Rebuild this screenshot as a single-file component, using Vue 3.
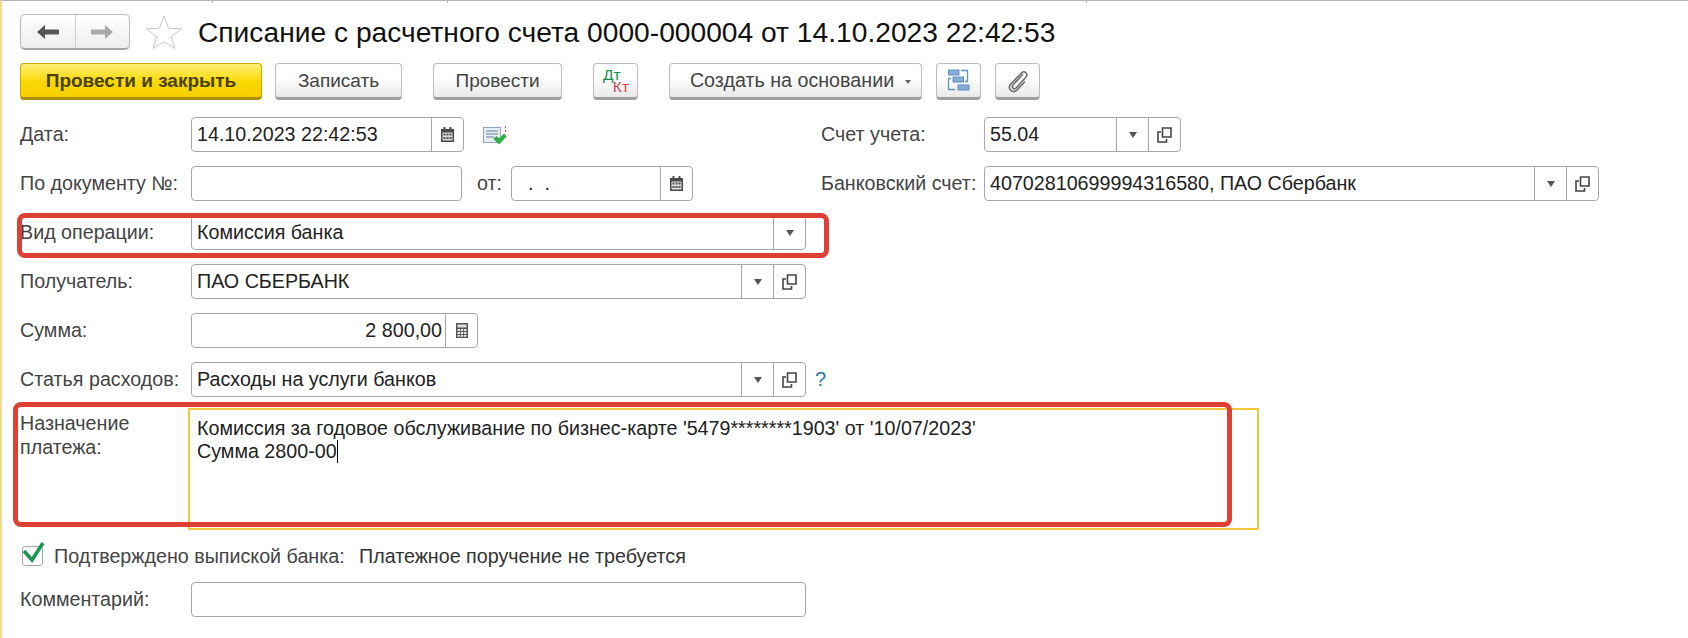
<script setup>
</script>

<template>
  <div class="page">
    <i class="tick t1"></i><i class="tick t2"></i><i class="tick t3"></i>
    <header class="head">
      <div class="nav">
        <span class="nav-cell">
          <svg width="22" height="16" viewBox="0 0 22 16"><path d="M0 8 8 1v4.500h14v5H8V15z" fill="#555"/></svg>
        </span>
        <span class="nav-cell">
          <svg width="22" height="16" viewBox="0 0 22 16"><path d="M22 8 14 1v4.500H0v5h14V15z" fill="#a9a9a9"/></svg>
        </span>
      </div>
      <svg class="star" width="36" height="34" viewBox="0 0 36 34"><path d="M18 1l4.600 12.300 12.900.5-10.100 8 3.500 11.700L18 26.700 7.100 33.500l3.500-11.700-10.100-8 12.900-.5z" fill="#fff" stroke="#c6c6c6"/></svg>
      <h1 class="title">Списание с расчетного счета 0000-000004 от 14.10.2023 22:42:53</h1>
    </header>

    <div class="toolbar">
      <button class="btn primary">Провести и закрыть</button>
      <button class="btn save">Записать</button>
      <button class="btn post">Провести</button>
      <button class="btn square dtkt">
        <span class="dt">Дт</span><span class="kt">Кт</span>
      </button>
      <button class="btn create">Создать на основании<i class="caret"></i></button>
      <button class="btn square struct">
        <svg width="23" height="23" viewBox="0 0 23 23" fill="none">
          <path d="M4 9.500H1.500v11H8M14 1.500h6.500v11H18" stroke="#5b93c4" stroke-width="1.300"/>
          <rect x="1.500" y="1" width="10.500" height="5" fill="#85aed6" stroke="#5f8fbd"/>
          <rect x="6" y="8" width="10.500" height="5" fill="#85aed6" stroke="#5f8fbd"/>
          <rect x="11" y="16" width="11" height="5" fill="#85aed6" stroke="#5f8fbd"/>
        </svg>
      </button>
      <button class="btn square clip">
        <svg width="22" height="24" viewBox="0 0 22 24" fill="none">
          <path d="M16 5 6 16c-2 2.500 1 5 3.200 3L19 8c2.500-3-1.500-7-4.500-4.200L3.500 15.500c-3.500 4.500 2.500 9.500 6.500 5.500l8-8.500" stroke="#6e6e6e" stroke-width="1.600"/>
        </svg>
      </button>
    </div>

    <div class="row">
      <label class="lbl">Дата:</label>
      <div class="field w-date">
        <span class="val">14.10.2023 22:42:53</span>
        <span class="cell"><svg width="13" height="15" viewBox="0 0 13 15"><path d="M0 2h13v13H0z" fill="#4a4a4a"/><path d="M2.500 0h2v4h-2zM8.500 0h2v4h-2z" fill="#4a4a4a"/><path d="M1.500 5.500h10v8h-10z" fill="#ddd"/><path d="M2.500 6.500h2v2h-2zM5.500 6.500h2v2h-2zM8.500 6.500h2v2h-2zM2.500 10h2v2h-2zM5.500 10h2v2h-2zM8.500 10h2v2h-2z" fill="#555"/></svg></span>
      </div>
      <svg class="docicon" width="24" height="20" viewBox="0 0 24 20">
        <rect x=".5" y="1.500" width="17" height="15" fill="#e6eef6" stroke="#8aa6c1"/>
        <path d="M3 5h12M3 8h12M3 11h8" stroke="#6d7f92" stroke-width="1.200"/>
        <path d="M22.500 0v2M22.500 4v2" stroke="#d05050"/>
        <path d="M10.500 13l3-3 2.500 2.500 5-5 2.500 3-7.500 8z" fill="#2fae3f"/>
      </svg>
      <div class="right">
        <label class="lbl r-lbl">Счет учета:</label>
        <div class="field w-acc">
          <span class="val">55.04</span>
          <span class="cell"><i class="tri"></i></span>
          <span class="cell"><svg width="15" height="16" viewBox="0 0 15 16" fill="none" stroke="#444" stroke-width="1.600"><path d="M5.500 1h8.500v9H5.500z"/><path d="M4 5H1v10h8.500v-3"/></svg></span>
        </div>
      </div>
    </div>

    <div class="row">
      <label class="lbl">По документу №:</label>
      <div class="field w-doc"></div>
      <span class="from">от:</span>
      <div class="field w-date2">
        <span class="val dots">.&nbsp;&nbsp;.</span>
        <span class="cell"><svg width="13" height="15" viewBox="0 0 13 15"><path d="M0 2h13v13H0z" fill="#4a4a4a"/><path d="M2.500 0h2v4h-2zM8.500 0h2v4h-2z" fill="#4a4a4a"/><path d="M1.500 5.500h10v8h-10z" fill="#ddd"/><path d="M2.500 6.500h2v2h-2zM5.500 6.500h2v2h-2zM8.500 6.500h2v2h-2zM2.500 10h2v2h-2zM5.500 10h2v2h-2zM8.500 10h2v2h-2z" fill="#555"/></svg></span>
      </div>
      <div class="right">
        <label class="lbl r-lbl">Банковский счет:</label>
        <div class="field w-bank">
          <span class="val">40702810699994316580, ПАО Сбербанк</span>
          <span class="cell"><i class="tri"></i></span>
          <span class="cell"><svg width="15" height="16" viewBox="0 0 15 16" fill="none" stroke="#444" stroke-width="1.600"><path d="M5.500 1h8.500v9H5.500z"/><path d="M4 5H1v10h8.500v-3"/></svg></span>
        </div>
      </div>
    </div>

    <div class="row">
      <label class="lbl">Вид операции:</label>
      <div class="field w-main">
        <span class="val">Комиссия банка</span>
        <span class="cell"><i class="tri"></i></span>
      </div>
    </div>

    <div class="row">
      <label class="lbl">Получатель:</label>
      <div class="field w-main">
        <span class="val">ПАО СБЕРБАНК</span>
        <span class="cell"><i class="tri"></i></span>
        <span class="cell"><svg width="15" height="16" viewBox="0 0 15 16" fill="none" stroke="#444" stroke-width="1.600"><path d="M5.500 1h8.500v9H5.500z"/><path d="M4 5H1v10h8.500v-3"/></svg></span>
      </div>
    </div>

    <div class="row">
      <label class="lbl">Сумма:</label>
      <div class="field w-sum">
        <span class="val num">2 800,00</span>
        <span class="cell"><svg width="12" height="15" viewBox="0 0 12 15"><path d="M0 0h12v15H0z" fill="#555"/><path d="M1.500 1.500h9v3h-9z" fill="#ddd"/><path d="M1.500 6h2.400v2H1.500zM4.800 6h2.400v2H4.800zM8.100 6h2.400v2H8.100zM1.500 9h2.400v2H1.500zM4.800 9h2.400v2H4.800zM8.100 9h2.400v2H8.100zM1.500 12h2.400v1.800H1.500zM4.800 12h2.400v1.800H4.800zM8.100 12h2.400v1.800H8.100z" fill="#eee"/></svg></span>
      </div>
    </div>

    <div class="row">
      <label class="lbl">Статья расходов:</label>
      <div class="field w-main">
        <span class="val">Расходы на услуги банков</span>
        <span class="cell"><i class="tri"></i></span>
        <span class="cell"><svg width="15" height="16" viewBox="0 0 15 16" fill="none" stroke="#444" stroke-width="1.600"><path d="M5.500 1h8.500v9H5.500z"/><path d="M4 5H1v10h8.500v-3"/></svg></span>
      </div>
      <span class="help">?</span>
    </div>

    <div class="row purpose">
      <label class="lbl two">Назначение<br>платежа:</label>
      <div class="area">
        <div>Комиссия за годовое обслуживание по бизнес-карте '5479********1903' от '10/07/2023'</div>
        <div>Сумма 2800-00<i class="cursor"></i></div>
      </div>
    </div>

    <div class="check-row">
      <span class="box">
        <svg width="24" height="22" viewBox="0 0 24 22"><path d="M2 9l8 9L21 1" fill="none" stroke="#1a9850" stroke-width="3.600"/></svg>
      </span>
      <span class="lbl check-lbl">Подтверждено выпиской банка:</span>
      <span class="note">Платежное поручение не требуется</span>
    </div>

    <div class="row comment">
      <label class="lbl">Комментарий:</label>
      <div class="field w-main"></div>
    </div>

    <div class="mark mark-a"></div>
    <div class="mark mark-b"></div>
  </div>
</template>

<style>
html, body { margin: 0; background: #fff; }
</style>

<style scoped>
.page {
  position: relative;
  box-sizing: border-box;
  width: 1688px;
  height: 638px;
  overflow: hidden;
  background: #fff;
  border-left: 2px solid #f0dc8c;
  border-top: 1px solid #b4b4b4;
  padding-left: 18px;
  font-family: "Liberation Sans", Arial, sans-serif;
  font-size: 19.7px;
  color: #333;
}
.tick {
  position: absolute;
  top: 0;
  width: 1px;
  height: 2px;
  background: #b4b4b4;
}
.t1 { left: 210px; }
.t2 { left: 445px; }
.t3 { left: 1084px; }
.head {
  display: flex;
  align-items: center;
  height: 36px;
  margin-top: 13px;
}
.nav {
  box-sizing: border-box;
  display: flex;
  width: 110px;
  height: 36px;
  border: 1px solid #b9b9b9;
  border-bottom: 2px solid #a5a5a5;
  border-radius: 5px;
  background: linear-gradient(#fff, #eee);
}
.nav-cell {
  flex: 1;
  display: flex;
  align-items: center;
  justify-content: center;
}
.nav-cell + .nav-cell { border-left: 1px solid #d0d0d0; }
.star { margin-left: 16px; flex: none; }
.title {
  margin: 0 0 0 16px;
  font-size: 28.2px;
  font-weight: 400;
  color: #111;
  white-space: nowrap;
}
.toolbar {
  display: flex;
  align-items: stretch;
  height: 37px;
  margin-top: 13px;
}
.btn {
  box-sizing: border-box;
  padding: 0;
  margin: 0;
  display: flex;
  align-items: center;
  justify-content: center;
  border: 1px solid #bdbdbd;
  border-bottom: 3px solid #9f9f9f;
  border-radius: 4px;
  background: linear-gradient(#fff 40%, #e9e9e9);
  font: inherit;
  color: #444;
}
.primary {
  width: 242px;
  font-size: 19px;
  font-weight: 700;
  color: #4a4000;
  border-color: #c9a800;
  border-bottom-color: #a88f10;
  background: linear-gradient(#fff07a, #fbd800 55%, #f6cf00);
}
.save { width: 127px; margin-left: 13px; font-size: 19px; }
.post { width: 129px; margin-left: 31px; font-size: 19px; }
.square { width: 45px; }
.dtkt { margin-left: 31px; flex-direction: column; line-height: 12px; font-size: 15.5px; }
.dt { color: #158f48; align-self: flex-start; margin-left: 9px; }
.kt { color: #d0444c; align-self: flex-end; margin-right: 8px; }
.create { width: 253px; margin-left: 31px; padding-left: 10px; }
.caret {
  width: 0;
  height: 0;
  margin-left: 11px;
  margin-top: 2px;
  border: 3.500px solid transparent;
  border-top: 4px solid #666;
  border-bottom: 0;
}
.struct { margin-left: 14px; }
.clip { margin-left: 14px; }
.row {
  display: flex;
  align-items: stretch;
  height: 35px;
  margin-top: 14px;
}
.toolbar + .row { margin-top: 17px; }
.lbl {
  width: 171px;
  flex: none;
  display: flex;
  align-items: center;
  color: #444;
  white-space: nowrap;
}
.field {
  box-sizing: border-box;
  display: flex;
  align-items: stretch;
  height: 35px;
  border: 1px solid #a8a8a8;
  border-radius: 4px;
  background: #fff;
}
.val {
  flex: 1;
  display: flex;
  align-items: center;
  padding-left: 5px;
  color: #222;
  white-space: nowrap;
  overflow: hidden;
}
.num { justify-content: flex-end; padding-right: 3px; }
.dots { padding-left: 16px; }
.cell {
  width: 31px;
  flex: none;
  display: flex;
  align-items: center;
  justify-content: center;
  border-left: 1px solid #a8a8a8;
}
.tri {
  width: 0;
  height: 0;
  border: 4px solid transparent;
  border-top: 6px solid #555;
  border-bottom: 0;
}
.w-date { width: 273px; }
.w-doc { width: 271px; }
.w-date2 { width: 182px; }
.w-main { width: 615px; }
.w-sum { width: 287px; }
.w-acc { width: 197px; }
.w-bank { width: 615px; }
.docicon { margin-left: 19px; margin-top: 9px; flex: none; }
.from {
  display: flex;
  align-items: center;
  width: 49px;
  padding-left: 15px;
  box-sizing: border-box;
  color: #444;
}
.right {
  display: flex;
  position: absolute;
  left: 819px;
}
.r-lbl { width: 163px; }
.help {
  display: flex;
  align-items: center;
  margin-left: 9px;
  color: #1f78b4;
  font-size: 20px;
}
.purpose {
  height: 122px;
  margin-top: 11px;
}
.two {
  display: block;
  width: 168px;
  padding-top: 3px;
  line-height: 24px;
}
.area {
  box-sizing: border-box;
  width: 1071px;
  height: 122px;
  border: 2px solid #f2c73c;
  padding: 7px 7px;
  line-height: 23px;
  color: #222;
}
.cursor {
  display: inline-block;
  width: 1px;
  height: 23px;
  background: #000;
  vertical-align: top;
}
.check-row {
  display: flex;
  align-items: center;
  height: 24px;
  margin-top: 14px;
  padding-left: 2px;
}
.box {
  box-sizing: border-box;
  width: 21px;
  height: 20px;
  border: 1px solid #a8a8a8;
  border-radius: 3px;
  flex: none;
  display: flex;
}
.box svg { margin: -5px 0 0 -1px; flex: none; }
.check-lbl { width: 305px; margin-left: 11px; }
.note { color: #333; }
.mark {
  position: absolute;
  box-sizing: border-box;
  border: 5px solid #de4035;
  border-radius: 8px;
  pointer-events: none;
}
.mark-a { left: 15px; top: 212px; width: 812px; height: 45px; }
.mark-b { left: 11px; top: 401px; width: 1219px; height: 125px; }
</style>
